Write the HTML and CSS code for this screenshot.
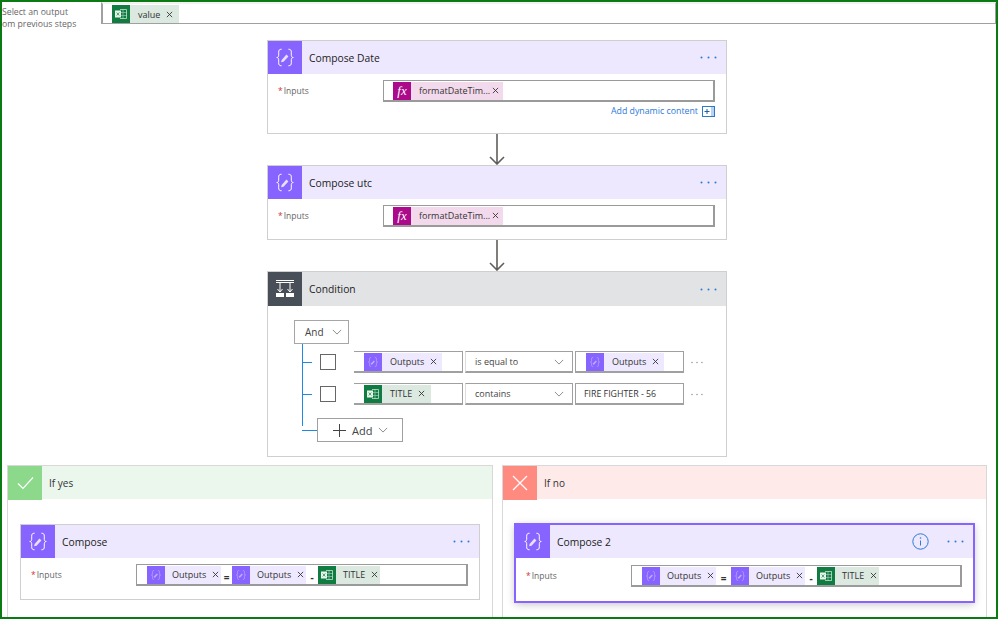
FILE: index.html
```html
<!DOCTYPE html>
<html lang="en">
<head>
  <meta charset="UTF-8"/>
  <title>Flow designer</title>
  <link rel="stylesheet" href="styles.css">
</head>
<body>
  <svg class="defs" width="0" height="0">
    <symbol id="i-compose" viewBox="0 0 34 34">
      <path d="M13.500 8.500c-2.500 0-3 1-3 3v3.200c0 1.400-.8 2.300-2 2.300 1.200 0 2 .9 2 2.300v3.200c0 2 .5 3 3 3M20.500 8.500c2.500 0 3 1 3 3v3.200c0 1.400.8 2.300 2 2.300-1.200 0-2 .9-2 2.300v3.200c0 2-.5 3-3 3" fill="none" stroke="currentColor" stroke-width="1"/>
      <path d="M13.500 19.500l5-5.500 2 2-5 5.500-2.500.5z" fill="currentColor" opacity=".8"/>
    </symbol>
    <symbol id="i-excel" viewBox="0 0 18 18">
      <path d="M8 4.500h6.500v9H8" fill="none" stroke="#fff" stroke-width="1" opacity=".6"/>
      <path d="M8 7.500h6.500M8 10.500h6.500M11 4.500v9" stroke="#fff" stroke-width=".8" opacity=".5"/>
      <rect x="3" y="5.500" width="6" height="7" fill="#e8f3ec"/>
      <path d="M4.700 7.500l2.600 3M7.300 7.500l-2.600 3" stroke="#107c41" stroke-width=".7"/>
    </symbol>
    <symbol id="i-close" viewBox="0 0 8 8">
      <path d="M1 1l6 6M7 1l-6 6" stroke="#333" stroke-width="1" fill="none"/>
    </symbol>
    <symbol id="i-chevron" viewBox="0 0 12 7">
      <path d="M1 1l5 5 5-5" stroke="#777" stroke-width="1" fill="none"/>
    </symbol>
    <symbol id="i-arrow" viewBox="0 0 16 31">
      <path d="M8 0v30M1 23l7 7 7-7" stroke="#605e5c" stroke-width="1.600" fill="none"/>
    </symbol>
    <symbol id="i-dots" viewBox="0 0 17 3">
      <circle cx="1.500" cy="1.500" r="1"/><circle cx="8.500" cy="1.500" r="1"/><circle cx="15.500" cy="1.500" r="1"/>
    </symbol>
  </svg>

  <div class="frame">
    <div class="apply-row">
      <div class="apply-label">Select an output<br>om previous steps</div>
      <div class="apply-box">
        <span class="chip chip-excel">
          <svg class="chip-icon"><use href="#i-excel"/></svg>
          <span class="chip-text">value</span>
          <svg class="chip-x"><use href="#i-close"/></svg>
        </span>
      </div>
    </div>

    <div class="flow">
      <div class="card compose first">
        <div class="card-head">
          <svg class="head-icon"><use href="#i-compose"/></svg>
          <span class="card-title">Compose Date</span>
          <svg class="dots"><use href="#i-dots"/></svg>
        </div>
        <div class="field">
          <span class="field-label"><b>*</b>Inputs</span>
          <div class="input">
            <span class="chip chip-fx">
              <span class="chip-icon fx">fx</span>
              <span class="chip-text">formatDateTim...</span>
              <svg class="chip-x"><use href="#i-close"/></svg>
            </span>
          </div>
        </div>
        <div class="dynamic">
          <span>Add dynamic content</span>
          <svg class="dynamic-icon" viewBox="0 0 13 11">
            <rect x=".5" y=".5" width="12" height="10" fill="#fff" stroke="#2b79c9"/>
            <rect x="9" y="1" width="3" height="9" fill="#b9d3ee"/>
            <path d="M5 3v5M2.500 5.500h5" stroke="#1f5f9f" stroke-width="1"/>
          </svg>
        </div>
      </div>

      <svg class="arrow"><use href="#i-arrow"/></svg>

      <div class="card compose second">
        <div class="card-head">
          <svg class="head-icon"><use href="#i-compose"/></svg>
          <span class="card-title">Compose utc</span>
          <svg class="dots"><use href="#i-dots"/></svg>
        </div>
        <div class="field">
          <span class="field-label"><b>*</b>Inputs</span>
          <div class="input">
            <span class="chip chip-fx">
              <span class="chip-icon fx">fx</span>
              <span class="chip-text">formatDateTim...</span>
              <svg class="chip-x"><use href="#i-close"/></svg>
            </span>
          </div>
        </div>
      </div>

      <svg class="arrow"><use href="#i-arrow"/></svg>

      <div class="card condition">
        <div class="card-head">
          <svg class="head-icon" viewBox="0 0 34 34">
            <path d="M8 8.500h18M8 10.500h18M12 10.500v9M22 10.500v9" stroke="#fff" stroke-width="1" fill="none"/>
            <path d="M9.500 17l2.500 3 2.500-3M19.500 17l2.500 3 2.500-3" stroke="#fff" stroke-width="1" fill="none"/>
            <rect x="8" y="21" width="8" height="4" fill="#fff"/>
            <rect x="18" y="21" width="8" height="4" fill="#fff"/>
          </svg>
          <span class="card-title">Condition</span>
          <svg class="dots"><use href="#i-dots"/></svg>
        </div>
        <div class="cond-body">
          <div class="and-btn">And <svg class="chevron"><use href="#i-chevron"/></svg></div>
          <div class="tree">
            <div class="rule">
              <span class="check"></span>
              <div class="cond-input">
                <span class="chip chip-compose">
                  <svg class="chip-icon"><use href="#i-compose"/></svg>
                  <span class="chip-text">Outputs</span>
                  <svg class="chip-x"><use href="#i-close"/></svg>
                </span>
              </div>
              <div class="operator">is equal to <svg class="chevron"><use href="#i-chevron"/></svg></div>
              <div class="cond-input full">
                <span class="chip chip-compose">
                  <svg class="chip-icon"><use href="#i-compose"/></svg>
                  <span class="chip-text">Outputs</span>
                  <svg class="chip-x"><use href="#i-close"/></svg>
                </span>
              </div>
              <svg class="rule-more"><use href="#i-dots"/></svg>
            </div>
            <div class="rule">
              <span class="check"></span>
              <div class="cond-input">
                <span class="chip chip-excel">
                  <svg class="chip-icon"><use href="#i-excel"/></svg>
                  <span class="chip-text">TITLE</span>
                  <svg class="chip-x"><use href="#i-close"/></svg>
                </span>
              </div>
              <div class="operator">contains <svg class="chevron"><use href="#i-chevron"/></svg></div>
              <div class="cond-input full plain">FIRE FIGHTER - 56</div>
              <svg class="rule-more"><use href="#i-dots"/></svg>
            </div>
            <div class="add-row">
              <div class="add-btn">
                <svg class="add-plus" viewBox="0 0 13 13"><path d="M6.500 0v13M0 6.500h13" stroke="#444" stroke-width="1"/></svg>
                Add
                <svg class="chevron"><use href="#i-chevron"/></svg>
              </div>
            </div>
          </div>
        </div>
      </div>
    </div>

    <div class="branches">
      <div class="branch yes">
        <div class="branch-head">
          <svg class="head-icon" viewBox="0 0 34 34"><path d="M10 17.500l5 5 10-11" stroke="#fff" stroke-width="1.200" fill="none"/></svg>
          <span class="branch-title">If yes</span>
        </div>
        <div class="branch-body">
          <div class="card compose nested">
            <div class="card-head">
              <svg class="head-icon"><use href="#i-compose"/></svg>
              <span class="card-title">Compose</span>
              <svg class="dots"><use href="#i-dots"/></svg>
            </div>
            <div class="field">
              <span class="field-label"><b>*</b>Inputs</span>
              <div class="input">
                <span class="chip chip-compose">
                  <svg class="chip-icon"><use href="#i-compose"/></svg>
                  <span class="chip-text">Outputs</span>
                  <svg class="chip-x"><use href="#i-close"/></svg>
                </span>
                <span class="sep">=</span>
                <span class="chip chip-compose">
                  <svg class="chip-icon"><use href="#i-compose"/></svg>
                  <span class="chip-text">Outputs</span>
                  <svg class="chip-x"><use href="#i-close"/></svg>
                </span>
                <span class="sep dash">-</span>
                <span class="chip chip-excel">
                  <svg class="chip-icon"><use href="#i-excel"/></svg>
                  <span class="chip-text">TITLE</span>
                  <svg class="chip-x"><use href="#i-close"/></svg>
                </span>
              </div>
            </div>
          </div>
        </div>
      </div>

      <div class="branch no">
        <div class="branch-head">
          <svg class="head-icon" viewBox="0 0 34 34"><path d="M10 10l14 14M24 10l-14 14" stroke="#fff" stroke-width="1.200" fill="none"/></svg>
          <span class="branch-title">If no</span>
        </div>
        <div class="branch-body">
          <div class="card compose nested selected">
            <div class="card-head">
              <svg class="head-icon"><use href="#i-compose"/></svg>
              <span class="card-title">Compose 2</span>
              <svg class="info" viewBox="0 0 17 17">
                <circle cx="8.500" cy="8.500" r="7.700" fill="none" stroke="#2b79d9" stroke-width="1"/>
                <path d="M8.500 7.500v5" stroke="#2b79d9" stroke-width="1"/>
                <circle cx="8.500" cy="5" r=".8" fill="#2b79d9"/>
              </svg>
              <svg class="dots"><use href="#i-dots"/></svg>
            </div>
            <div class="field">
              <span class="field-label"><b>*</b>Inputs</span>
              <div class="input">
                <span class="chip chip-compose">
                  <svg class="chip-icon"><use href="#i-compose"/></svg>
                  <span class="chip-text">Outputs</span>
                  <svg class="chip-x"><use href="#i-close"/></svg>
                </span>
                <span class="sep">=</span>
                <span class="chip chip-compose">
                  <svg class="chip-icon"><use href="#i-compose"/></svg>
                  <span class="chip-text">Outputs</span>
                  <svg class="chip-x"><use href="#i-close"/></svg>
                </span>
                <span class="sep dash">-</span>
                <span class="chip chip-excel">
                  <svg class="chip-icon"><use href="#i-excel"/></svg>
                  <span class="chip-text">TITLE</span>
                  <svg class="chip-x"><use href="#i-close"/></svg>
                </span>
              </div>
            </div>
          </div>
        </div>
      </div>
    </div>
  </div>
</body>
</html>
```

FILE: styles.css
```css
* { box-sizing:border-box; }
body { margin:0; background:#fff; font-family:'Open Sans',sans-serif; color:#333; }
.defs { display:block; height:0; }
.frame { width:998px; height:619px; border:2px solid #0b7a12; overflow:hidden; display:flex; flex-direction:column; background:#fff; }

.apply-row { display:flex; height:22px; flex:none; }
.apply-label { width:99px; margin-top:4px; flex:none; font-size:8.700px; line-height:12px; color:#666; white-space:nowrap; }
.apply-box { flex:1; background:#fff; border:solid #a0a0a0; border-width:2px 1px 1px 2px; border-top-color:#f2f2f2; padding:1px 0 0 9px; display:flex; align-items:flex-start; }

.chip { display:inline-flex; align-items:center; height:18px; flex:none; }
.chip-icon { width:18px; height:18px; flex:none; }
.chip-text { font-size:9px; color:#333; padding-left:8px; white-space:nowrap; flex:1; }
.chip-x { width:7px; height:7px; flex:none; margin-right:4px; margin-left:6px; }
.chip-excel .chip-icon { background:#107c41; }
.chip-excel { background:#dbe9e1; }
.chip-fx .chip-icon { background:#ab0a8a; }
.chip-fx { background:#f3d9ec; }
.chip-compose .chip-icon { background:#8764ff; color:#cdbfff; }
.chip-compose { background:#eee9ff; }
.fx { font-family:'Liberation Serif',serif; font-style:italic; color:#fff; font-size:13px; line-height:18px; text-align:center; }
.chip-fx .chip-text { width:70px; }
.chip-fx { width:110px; }
.apply-box .chip { width:67px; }
.apply-box .chip-x { margin-right:8px; }

.flow { width:460px; margin:16px 0 0 265px; display:flex; flex-direction:column; align-items:center; flex:none; }
.arrow { width:16px; height:31px; display:block; flex:none; }

.card { width:100%; background:#fff; border:1px solid #cfcfcf; flex:none; }
.card-head { height:34px; display:flex; align-items:center; }
.compose .card-head { background:#ede8fd; height:33px; }
.condition .card-head { background:#e2e3e5; }
.head-icon { width:34px; height:34px; flex:none; color:#fff; }
.compose .head-icon { background:#8764ff; height:33px; }
.condition .head-icon { background:#484f58; }
.card-title { font-size:10.300px; color:#222; margin-left:7px; flex:1; }
.dots { width:17px; height:3px; fill:#2b79d9; margin-right:9px; flex:none; }

.field { display:grid; grid-template-columns:105px 1fr; padding:6px 11px 0 10px; }
.field-label { font-size:8.500px; color:#666; line-height:22px; white-space:nowrap; }
.field-label b { color:#d13438; font-weight:400; margin-right:1px; }
.input { height:22px; border:1px solid #9a9a9a; border-right-width:2px; border-bottom-width:2px; padding:0 0 0 9px; display:flex; align-items:center; }

.first { padding-bottom:15px; }
.second { padding-bottom:12px; }
.dynamic { display:flex; justify-content:flex-end; align-items:center; gap:4px; padding:2px 11px 0 0; height:16px; font-size:8.800px; color:#2b79d9; }
.dynamic-icon { width:13px; height:11px; }

.cond-body { padding:14px 0 14px 26px; height:150px; }
.and-btn { width:55px; height:24px; border:1px solid #a6a6a6; display:flex; align-items:center; justify-content:space-between; padding:0 6px 0 10px; font-size:10px; color:#444; }
.chevron { width:10px; height:6px; flex:none; }
.tree { position:relative; padding-top:7px; }
.tree::before { content:''; position:absolute; left:8px; top:0; height:82px; border-left:1px solid #1f88e5; }
.rule { position:relative; display:flex; align-items:center; height:22px; margin-bottom:10px; padding-left:26px; }
.rule::before { content:''; position:absolute; left:8px; top:50%; width:10px; border-top:1px solid #1f88e5; }
.check { width:16px; height:16px; border:1px solid #666; margin-right:18px; flex:none; }
.cond-input { width:109px; height:22px; border:solid #a0a0a0; border-width:1px 1px 2px 0; padding:0 0 0 10px; display:flex; align-items:center; flex:none; }
.cond-input.full { margin-left:2px; border-left-width:1px; padding-left:10px; }
.plain { font-size:8.800px; color:#333; padding-left:8px !important; }
.cond-input .chip-compose { width:78px; }
.cond-input .chip-compose .chip-x { margin-right:7px; }
.cond-input .chip-excel { width:67px; }
.cond-input .chip-excel .chip-x { margin-right:8px; }
.operator { width:108px; height:22px; margin-left:2px; border:solid #a0a0a0; border-width:1px 1px 2px 0; border-left:1px solid #ddd; padding:0 8px 0 9px; display:flex; align-items:center; justify-content:space-between; font-size:9px; color:#444; flex:none; }
.rule-more { width:12px; height:3px; fill:#888; margin-left:7px; flex:none; }
.add-row { position:relative; padding-left:23px; margin-top:13px; height:24px; }
.add-row::before { content:''; position:absolute; left:8px; top:50%; width:15px; border-top:1px solid #1f88e5; }
.add-btn { width:86px; height:24px; border:1px solid #a0a0a0; display:flex; align-items:center; gap:6px; padding-left:15px; font-size:11px; color:#444; background:#fff; }
.add-plus { width:13px; height:13px; }

.branches { flex:1; display:flex; gap:9px; margin-top:8px; padding-left:5px; min-height:0; }
.branch { border:solid #d8d8d8; border-width:1px 1px 0 1px; background:#fff; }
.branch.yes { width:486px; }
.branch.no { width:485px; }
.branch-head { height:33px; display:flex; align-items:center; }
.branch-title { font-size:10px; color:#333; margin-left:7px; }
.yes .branch-head { background:#ebf6ec; }
.yes .branch-head .head-icon { background:#8cd98c; }
.no .branch-head { background:#ffeaea; }
.no .branch-head .head-icon { background:#ff8a80; }
.branch-body { padding:25px 12px 0; }

.nested { padding-bottom:13px; }
.nested .input { padding-left:10px; }
.nested .chip-compose { width:74px; }
.nested .chip-compose .chip-x { margin-right:6px; }
.nested .chip-excel { width:62px; }
.nested .chip-text { padding-left:7px; }
.sep { font-size:10px; width:11px; text-align:center; flex:none; color:#333; font-weight:700; padding-top:4px; }
.sep.dash { width:12px; }
.selected { padding-bottom:14px; border-color:#8764ff; box-shadow:0 0 0 1px #8764ff, 0 2px 8px rgba(0,0,0,.25); }
.selected .field { padding-top:7px; }
.selected .sep { width:15px; }
.selected .sep.dash { width:12px; }
.info { width:17px; height:17px; flex:none; margin-right:18px; }
```
